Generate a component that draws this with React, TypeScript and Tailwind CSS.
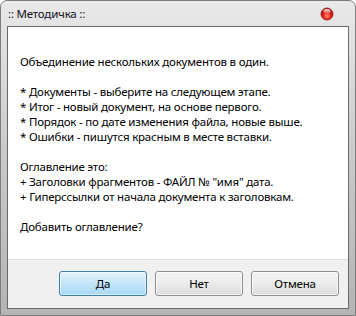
import React from 'react';

const font = { fontFamily: '"Noto Sans", "Open Sans", sans-serif' };

const lines = [
  'Объединение нескольких документов в один.',
  '',
  '* Документы - выберите на следующем этапе.',
  '* Итог - новый документ, на основе первого.',
  '* Порядок - по дате изменения файла, новые выше.',
  '* Ошибки - пишутся красным в месте вставки.',
  '',
  'Оглавление это:',
  '+ Заголовки фрагментов - ФАЙЛ № "имя" дата.',
  '+ Гиперссылки от начала документа к заголовкам.',
  '',
  'Добавить оглавление?',
];

function CloseDot() {
  return (
    <svg width="14" height="14" viewBox="0 0 14 14">
      <defs>
        <radialGradient id="rg" cx="50%" cy="65%" r="60%">
          <stop offset="0%" stopColor="#ff8a6a" />
          <stop offset="55%" stopColor="#e5201a" />
          <stop offset="100%" stopColor="#9c0c08" />
        </radialGradient>
        <linearGradient id="hl" x1="0" y1="0" x2="0" y2="1">
          <stop offset="0%" stopColor="#ffffff" stopOpacity="0.9" />
          <stop offset="100%" stopColor="#ffffff" stopOpacity="0.1" />
        </linearGradient>
      </defs>
      <circle cx="7" cy="7" r="6" fill="url(#rg)" stroke="#8a1410" strokeWidth="0.8" />
      <ellipse cx="7" cy="4.3" rx="3.6" ry="2.3" fill="url(#hl)" />
    </svg>
  );
}

function Button({ label, primary }: { label: string; primary?: boolean }) {
  return (
    <div
      className={
        primary
          ? 'w-[88px] h-[25px] flex items-center justify-center rounded-[3px] border border-[#3c7fb1] bg-gradient-to-b from-[#e5f4fd] via-[#c4e5f9] to-[#a7d8f6] text-[11.5px] tracking-[-0.2px] text-black shadow-[inset_0_0_0_1px_rgba(255,255,255,0.6)]'
          : 'w-[88px] h-[25px] flex items-center justify-center rounded-[3px] border border-[#8e8f8f] bg-gradient-to-b from-[#f4f4f4] via-[#ebebeb] to-[#dcdcdc] text-[11.5px] tracking-[-0.2px] text-black shadow-[inset_0_0_0_1px_rgba(255,255,255,0.7)]'
      }
    >
      {label}
    </div>
  );
}

export default function App() {
  return (
    <div className="w-[356px] h-[316px] bg-white" style={font}>
      <div className="w-[356px] h-[316px] flex flex-col border border-[#7d7d7d] rounded-t-[7px] bg-gradient-to-b from-[#e9e9e9] via-[#c9c9c9] to-[#b4b4b4] px-[6px] pb-[6px]">
        {/* Title bar */}
        <div className="h-[25px] flex items-center justify-between pl-[1px] pr-[15px]">
          <span className="text-[11.5px] tracking-[-0.2px] text-[#111122] leading-none mt-[1px]">:: Методичка ::</span>
          <div className="mt-[1px]">
            <CloseDot />
          </div>
        </div>

        {/* Client area */}
        <div className="flex-1 flex flex-col border border-[#6a6a6a] bg-white">
          <div className="flex-1 pt-[27px] pl-[12px] text-[11.5px] tracking-[-0.2px] leading-[15px] text-black">
            {lines.map((l, i) => (
              <div key={i} className="h-[15px] whitespace-nowrap">
                {l}
              </div>
            ))}
          </div>
          <div className="h-[49px] bg-[#f0f0f0] border-t border-[#dfdfdf] flex items-start justify-end gap-[8px] pt-[11px] pr-[9px]">
            <Button label="Да" primary />
            <Button label="Нет" />
            <Button label="Отмена" />
          </div>
        </div>
      </div>
    </div>
  );
}
